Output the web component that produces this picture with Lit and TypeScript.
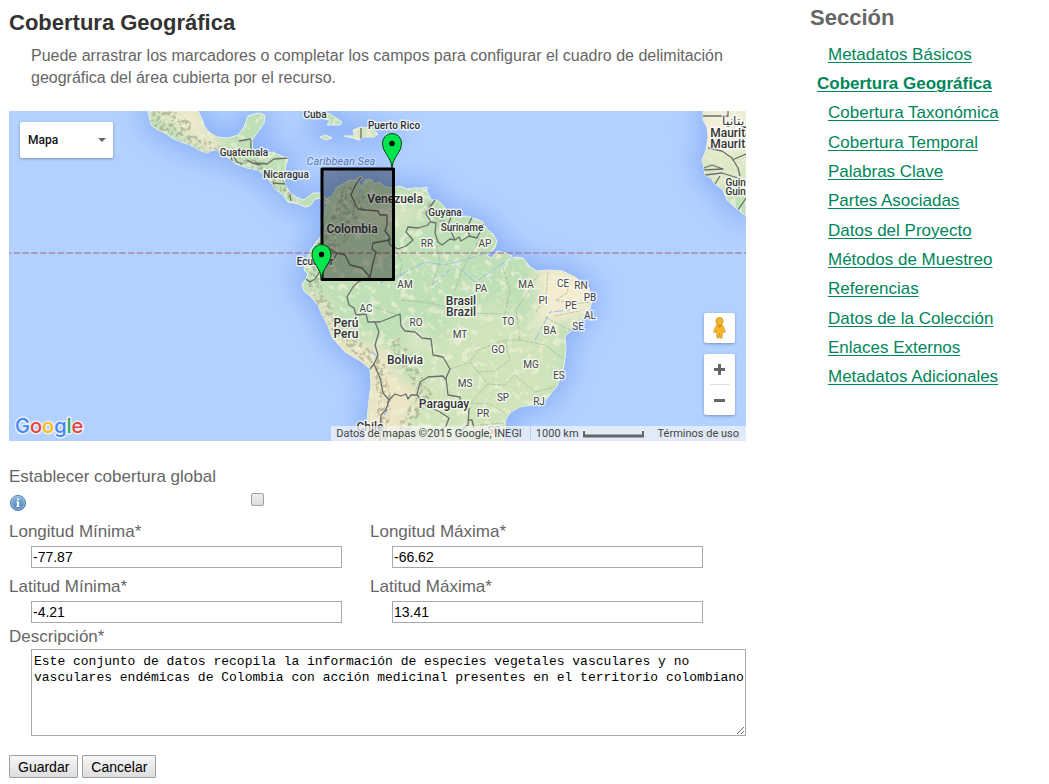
import { LitElement, html, svg, css } from "lit";
import { customElement, property } from "lit/decorators.js";

interface Place {
  x: number;
  y: number;
  name: string;
  kind: string;
}

const place = (kind: string, rows: [number, number, string][]): Place[] =>
  rows.map(([x, y, name]) => ({ x, y, name, kind }));

const PLACES: Place[] = [
  ...place("small", [
    [315, 118, "Cuba"],
    [394, 129, "Puerto Rico"],
    [244, 156, "Guatemala"],
    [286, 178, "Nicaragua"],
    [445, 216, "Guyana"],
    [462, 231, "Suriname"],
    [315, 265, "Ecuador"],
    [741, 186, "Guinée"],
    [741, 195, "Guinea"],
  ]),
  ...place("big", [
    [395, 203, "Venezuela"],
    [352, 233, "Colombia"],
    [461, 305, "Brasil"],
    [461, 316, "Brazil"],
    [346, 327, "Perú"],
    [346, 338, "Peru"],
    [405, 364, "Bolivia"],
    [444, 408, "Paraguay"],
    [370, 431, "Chile"],
    [739, 137, "Mauritania"],
    [739, 148, "Mauritanie"],
    [742, 125, "موريتانيا"],
  ]),
  ...place("state", [
    [427, 247, "RR"],
    [485, 247, "AP"],
    [405, 288, "AM"],
    [481, 292, "PA"],
    [526, 288, "MA"],
    [563, 287, "CE"],
    [581, 289, "RN"],
    [590, 301, "PB"],
    [543, 304, "PI"],
    [571, 309, "PE"],
    [590, 319, "AL"],
    [578, 330, "SE"],
    [550, 334, "BA"],
    [508, 325, "TO"],
    [366, 312, "AC"],
    [416, 326, "RO"],
    [460, 338, "MT"],
    [498, 353, "GO"],
    [531, 368, "MG"],
    [559, 379, "ES"],
    [465, 387, "MS"],
    [503, 401, "SP"],
    [539, 405, "RJ"],
    [483, 417, "PR"],
    [494, 434, "SC"],
  ]),
];

const SOUTH_AMERICA =
  "M325 200L333 195L336 188L343 184L350 180L354 181L361 176L363 178L358 182L362 187L365 180L371 179L375 184L380 182L385 187L393 188L400 186L407 189L415 188L423 188L428 193L431 200L437 200L443 205L449 213L458 217L467 216L476 219L483 222L487 229L493 234L497 241L495 248L487 256L492 258L497 251L506 253L512 256L505 263L514 257L523 258L530 267L537 271L550 270L562 271L575 277L583 283L589 288L592 300L590 309L584 317L577 325L571 331L565 336L566 350L564 365L562 374L557 386L550 395L543 403L532 405L520 407L511 412L506 419L505 427L503 441L365 441L367 420L369 400L371 385L370 369L362 362L352 356L345 352L338 344L332 337L328 326L322 315L318 305L311 297L304 291L302 284L306 279L308 274L304 270L307 257L312 248L317 241L322 235L321 222L325 212Z";
const CENTRAL_AMERICA =
  "M148 111L150 120L151 125L158 130L165 133L172 138L181 142L190 145L199 150L207 153L213 150L219 151L228 158L236 164L247 168L258 170L263 174L270 181L275 189L282 194L288 202L298 204L305 207L310 206L315 199L320 198L326 202L328 200L320 193L313 193L304 200L296 197L290 193L285 184L284 176L286 165L288 158L281 156L273 152L264 154L253 151L252 140L258 132L264 123L265 115L258 113L248 116L244 127L238 135L228 138L217 137L209 132L205 127L202 119L198 111Z";
const AFRICA =
  "M703 111L703 120L707 127L708 137L706 150L702 160L704 168L705 175L711 178L715 184L723 190L727 200L736 208L746 216V111Z";
const ISLANDS =
  "M317 112L330 114L342 122L340 125L327 125L330 120L318 117ZM320 137L326 135L332 138L326 140ZM344 136L354 136L353 130L361 127L371 128L378 134L374 137L364 137L359 140L353 138ZM386 134L393 134L393 137L386 137ZM423 188L427 187L427 191L422 191Z";
const LAND = SOUTH_AMERICA + CENTRAL_AMERICA + AFRICA + ISLANDS;

const BORDERS = [
  "M361 177L355 186L351 195L355 203L358 209L366 210L378 211L380 215L387 215L387 225L385 231L389 236L390 240L373 243L372 249L376 252L373 263L370 277",
  "M388 239L390 245L398 249L406 246L413 240L406 232L408 227L418 228L428 225L430 222",
  "M435 200L430 207L426 214L431 222L436 223L435 233L438 242L442 245L450 239L455 240L459 237L461 241L469 236L477 238L483 225L486 223",
  "M451 217L448 225L455 240M472 217L467 228L470 237",
  "M318 243L327 248L337 253L332 263L320 271L315 279L310 282L306 279",
  "M337 253L345 255L350 265L362 268L370 277L358 282L353 287L347 297L349 305L354 308L356 315L366 314L368 322L380 322L390 318L400 314L401 326L405 331L415 332L422 338L431 339L433 355L443 357L450 369L446 378L448 395L460 397L461 408",
  "M375 322L379 332L375 345L378 355L374 364L370 369M374 364L380 378L383 393L389 400L386 410L381 415L380 441",
  "M389 400L395 394L401 396L406 394L408 399L411 395L417 395L420 382L428 377L443 376L446 380",
  "M417 395L425 405L440 412L449 418L446 426L435 434M469 408L468 425L461 430L455 432M468 420L472 420L474 428",
  "M239 141L251 139M238 148L242 150L251 150M251 140V150M233 155L237 162L243 164M247 160L252 163L260 165M255 163L267 164L274 159L288 158M273 183L286 184M290 195L291 201M232 161L231 155M322 195L325 206",
  "M361 128V139M703 116H728V111M708 148L722 151L732 158L738 168L740 176M732 160L746 154M704 168L712 165L723 169L704 170M705 175L722 173L738 178M715 184L720 176M738 210L746 198",
];

const STATES =
  "M437 245L440 262L432 285M480 238L470 255L460 275L455 290M395 249L402 262L400 275M366 304L398 315M401 300L430 303L470 313L505 314M505 314L510 290L503 268M520 340L516 310L528 292L538 275M548 272L546 295L536 312M556 300L567 293L570 280M556 300L575 304L590 302M555 316L580 311M520 340L545 345L562 358M478 350L505 340L520 340M505 340L510 360L495 371L478 372L470 362L478 350M450 369L470 362M478 372L488 384L505 385L515 375M488 384L470 403M470 403L490 404L505 413M515 375L535 392L555 387M480 425L505 423M545 317L560 325L572 331";

@customElement("coverage-map")
export class CoverageMap extends LitElement {
  static styles = css`
    :host {
      display: block;
      position: relative;
      height: 330px;
      overflow: hidden;
      background: #b3d1ff;
      font-family: Roboto, sans-serif;
    }
    .canvas {
      display: block;
      width: 100%;
      height: 100%;
    }
    text {
      text-anchor: middle;
      paint-order: stroke;
      stroke: rgba(255, 255, 255, 0.7);
      stroke-width: 3px;
      stroke-linejoin: round;
      fill: #333;
    }
    .small {
      font-size: 10px;
      font-weight: 500;
    }
    .big {
      font-size: 12px;
      font-weight: 500;
    }
    .state {
      font-size: 10px;
      fill: #444;
    }
    .sea {
      font-size: 11px;
      font-style: italic;
      fill: #5c7bb0;
      stroke: rgba(210, 228, 255, 0.6);
    }
    .ocean {
      font-size: 12px;
      fill: #8da6cf;
      stroke: none;
    }
    .logo {
      font-family: Inter, Roboto, sans-serif;
      font-size: 20px;
      font-weight: 500;
      text-anchor: start;
      stroke: #e6eefb;
    }
    .type {
      position: absolute;
      left: 11px;
      top: 11px;
    }
    .type select {
      appearance: none;
      box-sizing: border-box;
      width: 93px;
      height: 36px;
      padding: 0 24px 0 8px;
      border: 0;
      border-radius: 2px;
      background: #fff;
      box-shadow: 0 1px 3px rgba(0, 0, 0, 0.3);
      color: #111;
      font: 500 12px Roboto, sans-serif;
    }
    .type svg {
      position: absolute;
      right: 7px;
      top: 16px;
      pointer-events: none;
    }
    .tools {
      position: absolute;
      right: 11px;
      bottom: 26px;
      display: flex;
      flex-direction: column;
      gap: 11px;
    }
    .card {
      display: flex;
      flex-direction: column;
      align-items: center;
      width: 31px;
      border-radius: 2px;
      background: #fff;
      box-shadow: 0 1px 3px rgba(0, 0, 0, 0.3);
    }
    .card button {
      display: grid;
      place-items: center;
      width: 31px;
      height: 30px;
      padding: 0;
      border: 0;
      background: none;
    }
    .line {
      width: 20px;
      height: 1px;
      background: #e0e0e0;
    }
    .credits {
      position: absolute;
      right: 0;
      bottom: 0;
      display: flex;
      align-items: center;
      height: 15px;
      background: rgba(245, 245, 245, 0.7);
      color: #444;
      font-size: 11px;
      line-height: 15px;
      white-space: nowrap;
    }
    .source {
      padding: 0 8px 0 5px;
      border-right: 1px solid #b3d1ff;
    }
    .scale {
      display: flex;
      align-items: center;
      gap: 4px;
      padding: 0 14px 0 5px;
    }
    .credits a {
      padding-right: 7px;
      color: #444;
      text-decoration: none;
    }
  `;

  private pin(x: number, y: number) {
    return svg`<g transform="translate(${x} ${y})">
      <path d="M0 0C-1 -12 -9.500 -15 -9.500 -25A9.500 9.500 0 0 1 9.500 -25C9.500 -15 1 -12 0 0Z" fill="#00e64d" stroke="#0b3d17" stroke-width="1"/>
      <circle cy="-24.500" r="2.700" fill="#000"/>
    </g>`;
  }

  render() {
    return html`
      <svg class="canvas" viewBox="9 111 737 330" preserveAspectRatio="xMidYMid slice" role="img" aria-label="Mapa">
        <defs>
          <clipPath id="land"><path d=${LAND} /></clipPath>
          <filter id="shelf" x="-20%" y="-20%" width="140%" height="140%"><feGaussianBlur stdDeviation="13" /></filter>
          <filter id="soft" x="-40%" y="-40%" width="180%" height="180%"><feGaussianBlur stdDeviation="7" /></filter>
          <filter id="relief" x="0" y="0" width="100%" height="100%" color-interpolation-filters="sRGB">
            <feTurbulence type="fractalNoise" baseFrequency="0.13" numOctaves="4" seed="8" />
            <feColorMatrix values="0 0 0 0 0.93  0 0 0 0 0.94  0 0 0 0 0.84  7 0 0 0 -3.9" />
          </filter>
          <filter id="ridge" x="0" y="0" width="100%" height="100%" color-interpolation-filters="sRGB">
            <feTurbulence type="fractalNoise" baseFrequency="0.25" numOctaves="3" seed="3" result="n" />
            <feColorMatrix in="n" values="0 0 0 0 0.62  0 0 0 0 0.64  0 0 0 0 0.52  0 7 0 0 -3.4" result="c" />
            <feComposite in="c" in2="SourceAlpha" operator="in" />
          </filter>
        </defs>
        <rect x="-400" y="111" width="1600" height="330" fill="#b3d1ff" />
        <path d=${LAND} fill="#86adf6" stroke="#86adf6" stroke-width="14" filter="url(#shelf)" opacity="0.9" />
        <path d=${LAND} fill="#bfdfb7" stroke="#e9f1ee" stroke-width="1" />
        <g clip-path="url(#land)">
          <g filter="url(#soft)">
            <path d="M455 320L500 300L530 330L560 330L555 400L500 441H410L400 400L430 350Z" fill="#cfe4bb" />
            <path d="M535 268L560 265L600 285L590 315L560 322L530 330L540 300Z" fill="#f5ecd0" />
            <path d="M360 210L385 205L425 210L400 230L360 220Z" fill="#d9e3c2" />
            <path d="M302 285L322 300L345 340L385 345L395 370L420 395L395 441H360L368 375L330 345Z" fill="#eee5c6" />
            <path d="M400 335L430 335L430 350L410 350Z" fill="#e4e9c8" />
            <path d="M148 105L200 105L210 135L230 150L210 155Z" fill="#efe9cc" />
            <path d="M700 105H750V150H700Z" fill="#f8f0dc" />
            <path d="M700 150H750V190H700Z" fill="#dde8c6" />
            <path d="M320 140L375 125L370 142L320 142Z" fill="#e8ebcc" />
          </g>
          <rect x="140" y="111" width="610" height="330" filter="url(#relief)" opacity="0.7" />
          <path
            d="M350 185L342 210L330 235L318 262L315 290L335 325L360 350L378 365L385 400L380 441M395 340L408 365L425 395L405 425L400 441M365 197L358 206L343 235L325 250M150 115L170 130L195 142L225 155L262 168L275 180L290 198M425 207L445 222M160 108L190 130"
            fill="none" stroke="#000" stroke-width="13" filter="url(#ridge)" opacity="0.6" />
          <path
            d="M400 275L425 262L445 265L465 260L490 252M402 275L380 283M432 285L450 270M455 265L475 282L505 262M470 300L480 285M535 340L550 312L570 310M360 190L363 192L362 197L359 193ZM371 350L375 354L377 357L373 353ZM388 372L391 374M384 411L387 412L385 415Z"
            fill="none" stroke="#94bff0" stroke-width="1" stroke-dasharray="9 3 4 2" />
          <path d=${STATES} fill="none" stroke="#93a68e" stroke-width="1" opacity="0.5" stroke-dasharray="4 1" />
          <g fill="none" stroke="#6a706b" stroke-width="1.300" stroke-linejoin="round">
            ${BORDERS.map((d) => svg`<path d=${d} />`)}
          </g>
        </g>
        <path d="M-400 253H1200" stroke="#a86a88" stroke-opacity="0.700" stroke-width="1.600" stroke-dasharray="6.600 2.200" />
        <text class="sea" x="341" y="165">Caribbean Sea</text>
        <text class="ocean" x="720" y="439">Oceano</text>
        ${PLACES.map((p) => svg`<text class=${p.kind} x=${p.x} y=${p.y}>${p.name}</text>`)}
        <rect x="322" y="169" width="71.500" height="110.500" fill="#000" fill-opacity="0.35" stroke="#000" stroke-width="3" stroke-linejoin="round" />
        ${this.pin(392, 168)} ${this.pin(321.5, 279)}
        <text class="logo" x="15" y="433"><tspan fill="#4285f4">G</tspan><tspan fill="#ea4335">o</tspan><tspan fill="#fbbc05">o</tspan><tspan fill="#4285f4">g</tspan><tspan fill="#34a853">l</tspan><tspan fill="#ea4335">e</tspan></text>
      </svg>

      <div class="type">
        <select aria-label="Tipo de mapa"><option>Mapa</option></select>
        <svg width="8" height="4" viewBox="0 0 8 4"><path d="M0 0H8L4 4Z" fill="#666" /></svg>
      </div>

      <div class="tools">
        <div class="card">
          <button type="button" aria-label="Street View">
            <svg width="13" height="22" viewBox="0 0 13 22">
              <path d="M3 8.500Q6.500 6.500 10 8.500L12.500 15L10.500 15.500L9.500 13.500L9 21H7L6.500 16L6 21H4L3.500 13.500L2.500 15.500L0.500 15Z" fill="#fbb829" stroke="#c98a14" stroke-width=".6" />
              <circle cx="6.500" cy="4.200" r="3.600" fill="#fbb829" stroke="#c98a14" stroke-width=".8" />
              <path d="M4 8Q6.500 9.500 9 8L6.500 11Z" fill="#ee7f1b" />
            </svg>
          </button>
        </div>
        <div class="card">
          <button type="button" aria-label="Acercar">
            <svg width="11" height="11" viewBox="0 0 11 11"><path d="M0 5.500H11M5.500 0V11" stroke="#666" stroke-width="3" /></svg>
          </button>
          <span class="line"></span>
          <button type="button" aria-label="Alejar">
            <svg width="11" height="11" viewBox="0 0 11 11"><path d="M0 5.500H11" stroke="#666" stroke-width="3" /></svg>
          </button>
        </div>
      </div>

      <div class="credits">
        <span class="source">Datos de mapas ©2015 Google, INEGI</span>
        <span class="scale">1000 km
          <svg width="61" height="8" viewBox="0 0 61 8">
            <path d="M1 0V6H60V0" fill="none" stroke="#fff" stroke-width="2" />
            <path d="M1 1V6H60V1" fill="none" stroke="#666" stroke-width="2" />
            <path d="M0 6H61" stroke="#666" stroke-width="3" />
          </svg>
        </span>
        <a href="#terminos">Términos de uso</a>
      </div>
    `;
  }
}

@customElement("section-nav")
export class SectionNav extends LitElement {
  @property() current = "";

  private sections = [
    "Metadatos Básicos",
    "Cobertura Geográfica",
    "Cobertura Taxonómica",
    "Cobertura Temporal",
    "Palabras Clave",
    "Partes Asociadas",
    "Datos del Proyecto",
    "Métodos de Muestreo",
    "Referencias",
    "Datos de la Colección",
    "Enlaces Externos",
    "Metadatos Adicionales",
  ];

  static styles = css`
    :host {
      display: block;
    }
    h2 {
      margin: 0;
      padding-top: 4px;
      color: #666;
      font-size: 22px;
      line-height: 28px;
    }
    ul {
      display: grid;
      grid-auto-rows: 1fr;
      align-items: center;
      height: 352px;
      margin: 8px 0 0;
      padding: 0 0 0 18px;
      list-style: none;
      font-size: 17px;
      line-height: 20px;
    }
    a {
      color: #00865a;
      text-underline-offset: 2px;
      text-decoration-thickness: 1px;
    }
    .current {
      margin-left: -11px;
      font-weight: bold;
    }
  `;

  render() {
    return html`
      <h2>Sección</h2>
      <ul>
        ${this.sections.map(
          (s) => html`<li class=${s === this.current ? "current" : ""}><a href="#">${s}</a></li>`
        )}
      </ul>
    `;
  }
}

@customElement("app-root")
export class AppRoot extends LitElement {
  private fields = [
    { id: "minLng", label: "Longitud Mínima*", value: "-77.87" },
    { id: "maxLng", label: "Longitud Máxima*", value: "-66.62" },
    { id: "minLat", label: "Latitud Mínima*", value: "-4.21" },
    { id: "maxLat", label: "Latitud Máxima*", value: "13.41" },
  ];

  static styles = css`
    :host {
      display: grid;
      grid-template-columns: minmax(0, 737fr) minmax(0, 239fr);
      column-gap: 64px;
      padding-left: 9px;
      background: #fff;
      color: #666;
      font-family: "Liberation Sans", Arial, sans-serif;
      font-size: 17px;
      line-height: 20px;
    }
    h1 {
      margin: 0;
      padding-top: 9px;
      color: #333;
      font-size: 22px;
      line-height: 28px;
    }
    .intro {
      margin: 8px 22px 22px;
      font-size: 16px;
      line-height: 22px;
    }
    .global {
      display: grid;
      grid-template-columns: 241px 1fr;
      margin-top: 26px;
    }
    .global label {
      grid-column: 1 / 3;
    }
    .info {
      margin-top: 7px;
      display: block;
    }
    .global input {
      appearance: none;
      box-sizing: border-box;
      width: 13px;
      height: 13px;
      margin: 6px 0 0 1px;
      border: 1px solid #a0a0a0;
      border-radius: 2px;
      background: linear-gradient(#eee, #ddd);
    }
    .fields {
      display: grid;
      grid-template-columns: 1fr 1fr;
      row-gap: 9px;
      margin-top: 10px;
      padding-right: 15px;
    }
    .field {
      display: flex;
      flex-direction: column;
      gap: 4px;
    }
    .field input {
      box-sizing: border-box;
      height: 22px;
      margin: 0 28px 0 22px;
      padding: 1px;
      border: 1px solid #a9a9a9;
      color: #000;
      font: 14px "Liberation Sans", Arial, sans-serif;
    }
    .description {
      display: flex;
      flex-direction: column;
      gap: 2px;
      margin-top: 4px;
    }
    textarea {
      box-sizing: border-box;
      height: 87px;
      margin: 0 0 0 22px;
      padding: 4px 0 4px 2px;
      border: 1px solid #a9a9a9;
      color: #000;
      font: 13px/16px "Liberation Mono", monospace;
      resize: both;
    }
    .actions {
      display: flex;
      gap: 4px;
      margin-top: 19px;
    }
    .actions button {
      box-sizing: border-box;
      height: 23px;
      padding: 0 8px;
      border: 1px solid #a0a0a0;
      border-radius: 1px;
      background: linear-gradient(#f6f6f6, #dedede);
      color: #000;
      font: 14px "Liberation Sans", Arial, sans-serif;
    }
  `;

  render() {
    return html`
      <main>
        <h1>Cobertura Geográfica</h1>
        <p class="intro">
          Puede arrastrar los marcadores o completar los campos para configurar el cuadro de delimitación geográfica del
          área cubierta por el recurso.
        </p>
        <coverage-map></coverage-map>
        <form @submit=${(e: Event) => e.preventDefault()}>
          <div class="global">
            <label for="global">Establecer cobertura global</label>
            <svg class="info" width="18" height="18" viewBox="0 0 18 18" aria-hidden="true">
              <defs>
                <linearGradient id="ball" x1="0" y1="0" x2="0" y2="1">
                  <stop offset="0" stop-color="#8db6df" />
                  <stop offset="1" stop-color="#4a80b8" />
                </linearGradient>
              </defs>
              <circle cx="9" cy="9" r="7.600" fill="url(#ball)" stroke="#5b86b4" stroke-width="1" />
              <circle cx="9" cy="9" r="6.300" fill="none" stroke="#a8c8e8" stroke-width=".8" />
              <path d="M8 4.500H10V6.200H8ZM7.300 7.500H10V12H10.800V13H7.200V12H8V8.500H7.300Z" fill="#fff" />
            </svg>
            <input id="global" type="checkbox" />
          </div>
          <div class="fields">
            ${this.fields.map(
              (f) => html`<div class="field">
                <label for=${f.id}>${f.label}</label>
                <input id=${f.id} type="text" .value=${f.value} />
              </div>`
            )}
          </div>
          <div class="description">
            <label for="description">Descripción*</label>
            <textarea
              id="description"
              .value=${"Este conjunto de datos recopila la información de especies vegetales vasculares y no vasculares endémicas de Colombia con acción medicinal presentes en el territorio colombiano"}
            ></textarea>
          </div>
          <div class="actions">
            <button type="submit">Guardar</button>
            <button type="button">Cancelar</button>
          </div>
        </form>
      </main>
      <section-nav current="Cobertura Geográfica"></section-nav>
    `;
  }
}
